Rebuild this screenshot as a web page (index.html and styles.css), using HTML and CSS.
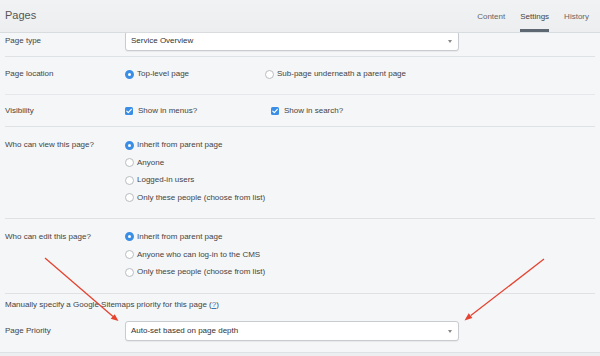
FILE: index.html
```html
<!DOCTYPE html>
<html>
<head>
<meta charset="utf-8">
<link rel="stylesheet" href="styles.css">
</head>
<body>
<div class="app">
  <header class="topbar">
    <h1 class="title">Pages</h1>
    <nav class="tabs">
      <a class="tab">Content</a>
      <a class="tab tab-active">Settings</a>
      <a class="tab">History</a>
    </nav>
  </header>
  <main class="viewport">
    <form class="form">
      <div class="row row-type">
        <div class="label label-select">Page type</div>
        <div class="control">
          <div class="select"><span>Service Overview</span><i class="caret"></i></div>
        </div>
      </div>
      <div class="row row-location">
        <div class="label">Page location</div>
        <div class="control inline">
          <label class="opt opt-w140"><span class="radio checked"></span>Top-level page</label>
          <label class="opt"><span class="radio"></span>Sub-page underneath a parent page</label>
        </div>
      </div>
      <div class="row row-visibility">
        <div class="label">Visibility</div>
        <div class="control inline">
          <label class="opt opt-w146"><span class="check"><svg viewBox="0 0 8 8" width="8" height="8"><path d="M1.8 4.2 L3.3 5.7 L6.3 2.3" fill="none" stroke="#fff" stroke-width="1.2" stroke-linecap="round" stroke-linejoin="round"/></svg></span>Show in menus?</label>
          <label class="opt"><span class="check"><svg viewBox="0 0 8 8" width="8" height="8"><path d="M1.8 4.2 L3.3 5.7 L6.3 2.3" fill="none" stroke="#fff" stroke-width="1.2" stroke-linecap="round" stroke-linejoin="round"/></svg></span>Show in search?</label>
        </div>
      </div>
      <div class="row row-view">
        <div class="label">Who can view this page?</div>
        <div class="control stack">
          <label class="opt"><span class="radio checked"></span>Inherit from parent page</label>
          <label class="opt"><span class="radio"></span>Anyone</label>
          <label class="opt"><span class="radio"></span>Logged-in users</label>
          <label class="opt"><span class="radio"></span>Only these people (choose from list)</label>
        </div>
      </div>
      <div class="row row-edit">
        <div class="label">Who can edit this page?</div>
        <div class="control stack">
          <label class="opt"><span class="radio checked"></span>Inherit from parent page</label>
          <label class="opt"><span class="radio"></span>Anyone who can log-in to the CMS</label>
          <label class="opt"><span class="radio"></span>Only these people (choose from list)</label>
        </div>
      </div>
      <div class="group-sitemap">
        <p class="note">Manually specify a Google Sitemaps priority for this page (<a class="help">?</a>)</p>
        <div class="row row-priority">
          <div class="label label-select">Page Priority</div>
          <div class="control">
            <div class="select"><span>Auto-set based on page depth</span><i class="caret"></i></div>
          </div>
        </div>
      </div>
    </form>
    <div class="footer"></div>
  </main>
  <svg class="annotations" width="600" height="356" viewBox="0 0 600 356">
    <line x1="45" y1="258" x2="113" y2="316.6" stroke="#e5432f" stroke-width="1.3"/>
    <polygon points="118.5,321 110.7,318.8 114.7,314.2" fill="#e5432f"/>
    <line x1="544" y1="259" x2="470.8" y2="315.6" stroke="#e5432f" stroke-width="1.3"/>
    <polygon points="464.5,320.5 468.7,313.3 472.4,318.1" fill="#e5432f"/>
  </svg>
</div>
</body>
</html>
```

FILE: styles.css
```css
* { box-sizing: border-box; }
html, body { margin: 0; padding: 0; }
body {
  font-family: "Liberation Sans", Arial, Helvetica, sans-serif;
  color: #444;
  background: #f5f6f8;
  width: 600px;
  height: 356px;
  overflow: hidden;
}
.app { position: relative; width: 600px; height: 356px; overflow: hidden; }

.topbar {
  height: 33px;
  display: flex;
  justify-content: space-between;
  align-items: stretch;
  padding: 0 11px 0 5px;
  background: linear-gradient(#f1f2f4, #eceef0);
  border-bottom: 1px solid #d9dcdf;
  position: relative;
  z-index: 2;
}
.title {
  margin: 0;
  font-size: 11px;
  font-weight: normal;
  color: #555;
  line-height: 31px;
}
.tabs { display: flex; gap: 15px; }
.tab {
  font-size: 8px;
  color: #666;
  padding-top: 3px;
  height: 32px;
  display: flex;
  align-items: center;
  border-bottom: 3px solid transparent;
}
.tab-active { color: #444; border-bottom-color: #5d6873; }

.viewport { height: 323px; overflow: hidden; }
.form { margin: -7px 0 0; padding: 0 5px 0 5px; }

.row {
  display: grid;
  grid-template-columns: 120px 334px;
  border-bottom: 1px solid #dfe2e5;
  font-size: 8px;
}
.label { line-height: 12px; color: #444; }
.label-select { line-height: 20px; }
.control { line-height: 12px; }
.inline { display: flex; }
.stack { display: flex; flex-direction: column; gap: 5.67px; }

.row-type { padding: 5px 0 5px; }
.row-location { padding: 11px 0 14px; border-bottom-color: #e6e8eb; }
.row-visibility { padding: 10px 0 9px; }
.row-view { padding: 12px 0 14px; }
.row-edit { padding: 12px 0 15px; }

.group-sitemap { padding: 5px 0 11px; }
.note { margin: 0 0 10px; font-size: 8px; line-height: 12px; color: #444; }
.help { color: #2b78c5; text-decoration: underline; }
.row-priority { padding: 0; border-bottom: none; }

.select {
  height: 20px;
  background: #fff;
  border: 1px solid #c8cbcf;
  border-radius: 3px;
  box-shadow: 0 1px 1px rgba(0,0,0,0.06);
  padding: 0 5px;
  line-height: 18px;
  font-size: 8px;
  color: #333;
  display: flex;
  justify-content: space-between;
  align-items: center;
}
.caret {
  width: 0; height: 0;
  border-left: 2.5px solid transparent;
  border-right: 2.5px solid transparent;
  border-top: 3px solid #888;
  margin-right: 1px;
}

.opt { display: flex; align-items: center; color: #444; }
.opt-w140 { width: 140px; }
.opt-w146 { width: 146px; }

.radio {
  width: 9px; height: 9px;
  border-radius: 50%;
  background: #fff;
  border: 1px solid #b9bcc0;
  margin-right: 3px;
  flex: none;
}
.radio.checked {
  background: #fff;
  border: 3px solid #3a8ee6;
}
.check {
  width: 8px; height: 8px;
  border-radius: 1.5px;
  background: #3a8ee6;
  margin: 0 5px 0 0;
  flex: none;
  display: flex;
}

.footer {
  height: 10px;
  background: #eceef0;
  border-top: 1px solid #dfe2e5;
}

.annotations { position: absolute; left: 0; top: 0; pointer-events: none; z-index: 3; }
```
